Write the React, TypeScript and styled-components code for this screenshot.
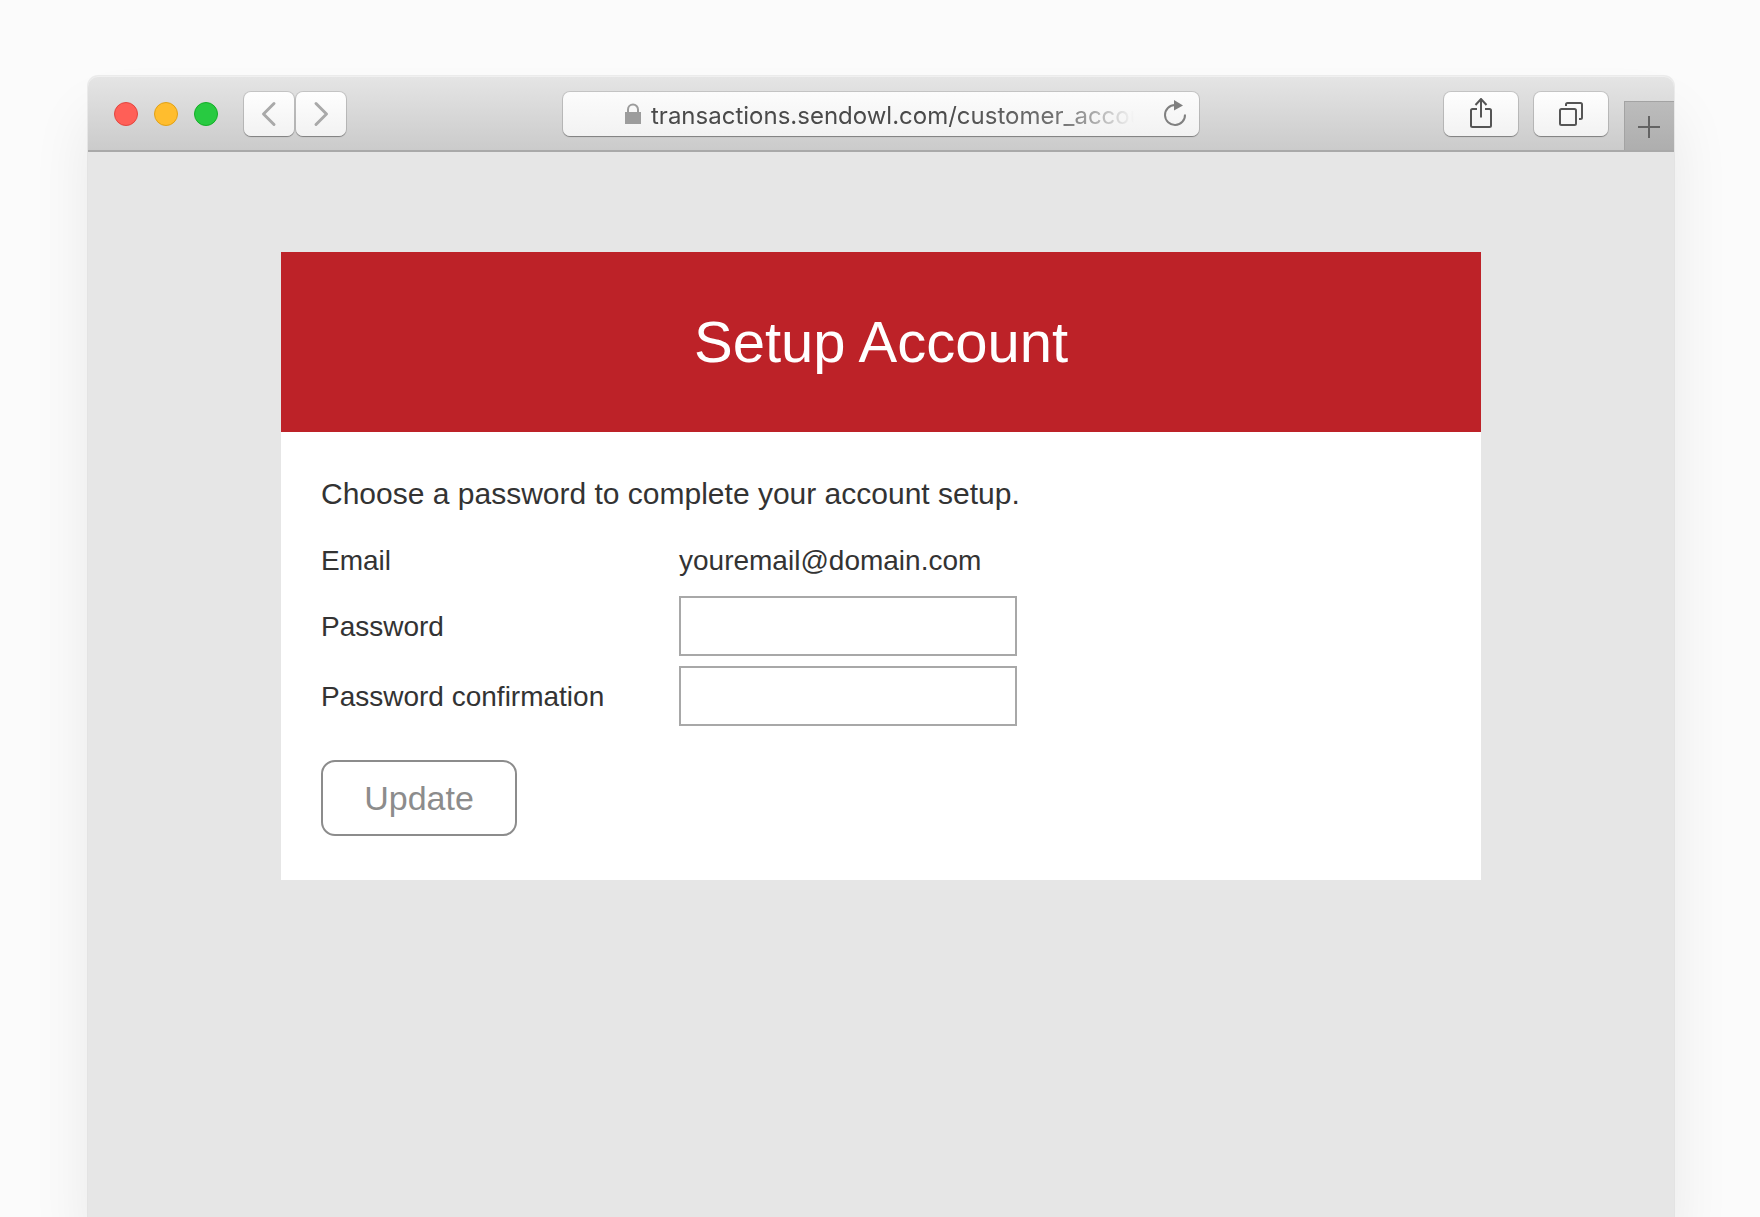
import React from "react";
import styled, { createGlobalStyle } from "styled-components";

const GlobalStyle = createGlobalStyle`
  *, *::before, *::after { box-sizing: border-box; }
  body {
    margin: 0;
    background: #fbfbfb;
    color: #333;
    font-family: "Liberation Sans", Arial, Helvetica, sans-serif;
  }
`;

const Page = styled.div`
  display: flex;
  flex-direction: column;
  min-height: 100vh;
  padding: 76px 86px 0 88px;
  overflow: hidden;
`;

const BrowserWindow = styled.div`
  flex: 1;
  display: flex;
  flex-direction: column;
  background: #e6e6e6;
  border-radius: 10px 10px 0 0;
  box-shadow: 0 0 0 1px rgba(0, 0, 0, 0.06), 0 40px 60px rgba(0, 0, 0, 0.08);
`;

const Toolbar = styled.header`
  display: grid;
  grid-template-columns: 1fr minmax(0, 636px) 1fr;
  align-items: center;
  height: 76px;
  padding-top: 2px;
  background: linear-gradient(#e5e5e5, #cbcbcb);
  border-bottom: 2px solid #a9a9a9;
  border-radius: 10px 10px 0 0;
  box-shadow: inset 0 1px 0 #f0f0f0;
`;

const LeftTools = styled.div`
  display: flex;
  align-items: center;
  gap: 26px;
  padding-left: 26px;
`;

const Lights = styled.div`
  display: flex;
  gap: 16px;
`;

const Light = styled.button<{ $fill: string; $edge: string }>`
  width: 24px;
  height: 24px;
  padding: 0;
  border: 1px solid ${(p) => p.$edge};
  border-radius: 50%;
  background: ${(p) => p.$fill};
`;

const NavButtons = styled.nav`
  display: flex;
  gap: 2px;
`;

const ToolButton = styled.button<{ $width: number }>`
  display: flex;
  align-items: center;
  justify-content: center;
  width: ${(p) => p.$width}px;
  height: 44px;
  padding: 0;
  border: 0;
  border-radius: 7px;
  background: linear-gradient(#fefefe, #f2f2f2);
  box-shadow: 0 0 0 1px rgba(0, 0, 0, 0.12), 0 1px 1px rgba(0, 0, 0, 0.3);
`;

const AddressBar = styled.div`
  display: flex;
  align-items: center;
  height: 44px;
  padding: 0 12px 0 62px;
  border-radius: 7px;
  background: linear-gradient(#fcfcfc, #f2f2f2);
  box-shadow: 0 0 0 1px rgba(0, 0, 0, 0.12), 0 1px 1px rgba(0, 0, 0, 0.3);
`;

const AddressInput = styled.input`
  flex: 1;
  min-width: 0;
  height: 44px;
  margin: 0 24px 0 10px;
  padding: 2px 0 0;
  border: 0;
  outline: 0;
  background: transparent;
  color: #4a4a4a;
  font: 24px/40px Inter, Roboto, sans-serif;
  mask-image: linear-gradient(to right, #000 60%, rgba(0, 0, 0, 0.75) 85%, transparent 99%);
`;

const ReloadButton = styled.button`
  display: flex;
  padding: 0;
  border: 0;
  background: transparent;
`;

const RightTools = styled.div`
  display: flex;
  align-items: center;
  justify-content: flex-end;
  align-self: stretch;
  gap: 16px;
`;

const NewTabButton = styled.button`
  display: flex;
  align-items: center;
  justify-content: center;
  align-self: flex-end;
  width: 50px;
  height: 49px;
  padding: 2px 1px 0 0;
  border: solid #a3a3a3;
  border-width: 1px 0 0 1px;
  background: linear-gradient(#bcbcbc, #aeaeae);
`;

const Content = styled.main`
  display: flex;
  justify-content: center;
  padding: 100px 24px;
`;

const Card = styled.section`
  width: 100%;
  max-width: 1200px;
  background: #fff;
`;

const CardHeader = styled.header`
  display: flex;
  align-items: center;
  justify-content: center;
  height: 180px;
  background: #bd2228;
`;

const Title = styled.h1`
  margin: 0;
  color: #fff;
  font-size: 58px;
  font-weight: 400;
  line-height: 64px;
`;

const Form = styled.form`
  padding: 40px 40px 44px;
`;

const Intro = styled.p`
  margin: 0 0 18px;
  font-size: 30px;
  line-height: 44px;
`;

const Fields = styled.div`
  display: grid;
  grid-template-columns: 358px minmax(0, 338px);
  row-gap: 10px;
  align-items: center;
  font-size: 28px;
  line-height: 32px;
`;

const FieldName = styled.label`
  padding-top: 2px;
`;

const EmailValue = styled.output`
  padding: 11px 0 9px;
`;

const TextInput = styled.input`
  width: 100%;
  height: 60px;
  padding: 0 12px;
  border: 2px solid #a8a8a8;
  border-radius: 0;
  background: #fff;
  color: inherit;
  font: inherit;
`;

const SubmitButton = styled.button`
  display: block;
  width: 196px;
  height: 76px;
  margin: 34px 0 0;
  padding: 0;
  border: 2px solid #8c8c8c;
  border-radius: 14px;
  background: #fff;
  color: #8c8c8c;
  font: 34px/40px "Liberation Sans", Arial, Helvetica, sans-serif;
`;

const Chevron = ({ d }: { d: string }) => (
  <svg width="24" height="28" viewBox="0 0 24 28" fill="none" stroke="#a9a9a9" strokeWidth="3" strokeLinecap="round" strokeLinejoin="round">
    <path d={d} />
  </svg>
);

const LockIcon = () => (
  <svg width="16" height="22" viewBox="0 0 16 22">
    <path d="M3 10V6.500a5 5 0 0 1 10 0V10" fill="none" stroke="#9c9c9c" strokeWidth="2" />
    <rect y="9" width="16" height="12" fill="#9c9c9c" />
  </svg>
);

const ReloadIcon = () => (
  <svg width="24" height="28" viewBox="0 1 24 28">
    <path d="M12 6A10 10 0 1 0 22 15.500" fill="none" stroke="#808080" strokeWidth="2" />
    <path d="M11 1v10.500l9-5z" fill="#808080" />
  </svg>
);

const ShareIcon = () => (
  <svg width="24" height="32" viewBox="0 1 24 32" fill="none" stroke="#555" strokeWidth="2">
    <path d="M8 12H3.500Q2 12 2 13.500v15Q2 30 3.500 30h17q1.500 0 1.500-1.500v-15Q22 12 20.500 12H16" />
    <path d="M12 20.500V2M6.500 8 12 2l5.500 6" />
  </svg>
);

const TabsIcon = () => (
  <svg width="26" height="26" viewBox="0 0 26 26" fill="none" stroke="#555" strokeWidth="2">
    <rect x="2" y="8" width="16" height="16" rx="1.500" />
    <path d="M8 5V3.500Q8 2 9.500 2h13Q24 2 24 3.500v13q0 1.500-1.500 1.500H21" />
  </svg>
);

const PlusIcon = () => (
  <svg width="22" height="22" viewBox="0 0 22 22" stroke="#636363" strokeWidth="2">
    <path d="M11 0v22M0 11h22" />
  </svg>
);

const lights = [
  { name: "Close", fill: "#ff5f57", edge: "#e2463f" },
  { name: "Minimize", fill: "#ffbd2e", edge: "#e1a116" },
  { name: "Zoom", fill: "#28ca41", edge: "#14ae27" },
];

export default function App() {
  return (
    <>
      <GlobalStyle />
      <Page>
        <BrowserWindow>
          <Toolbar>
            <LeftTools>
              <Lights>
                {lights.map((l) => (
                  <Light key={l.name} type="button" aria-label={l.name} $fill={l.fill} $edge={l.edge} />
                ))}
              </Lights>
              <NavButtons aria-label="History">
                <ToolButton type="button" aria-label="Back" $width={50}>
                  <Chevron d="M17 3.500 6.500 14 17 24.500" />
                </ToolButton>
                <ToolButton type="button" aria-label="Forward" $width={50}>
                  <Chevron d="M7 3.500 17.500 14 7 24.500" />
                </ToolButton>
              </NavButtons>
            </LeftTools>
            <AddressBar>
              <LockIcon />
              <AddressInput aria-label="Address" type="text" defaultValue="transactions.sendowl.com/customer_accounts" />
              <ReloadButton type="button" aria-label="Reload">
                <ReloadIcon />
              </ReloadButton>
            </AddressBar>
            <RightTools>
              <ToolButton type="button" aria-label="Share" $width={74}>
                <ShareIcon />
              </ToolButton>
              <ToolButton type="button" aria-label="Show all tabs" $width={74}>
                <TabsIcon />
              </ToolButton>
              <NewTabButton type="button" aria-label="New tab">
                <PlusIcon />
              </NewTabButton>
            </RightTools>
          </Toolbar>
          <Content>
            <Card>
              <CardHeader>
                <Title>Setup Account</Title>
              </CardHeader>
              <Form onSubmit={(e) => e.preventDefault()}>
                <Intro>Choose a password to complete your account setup.</Intro>
                <Fields>
                  <FieldName htmlFor="email">Email</FieldName>
                  <EmailValue id="email">youremail@domain.com</EmailValue>
                  <FieldName htmlFor="password">Password</FieldName>
                  <TextInput id="password" type="password" />
                  <FieldName htmlFor="confirmation">Password confirmation</FieldName>
                  <TextInput id="confirmation" type="password" />
                </Fields>
                <SubmitButton type="submit">Update</SubmitButton>
              </Form>
            </Card>
          </Content>
        </BrowserWindow>
      </Page>
    </>
  );
}
